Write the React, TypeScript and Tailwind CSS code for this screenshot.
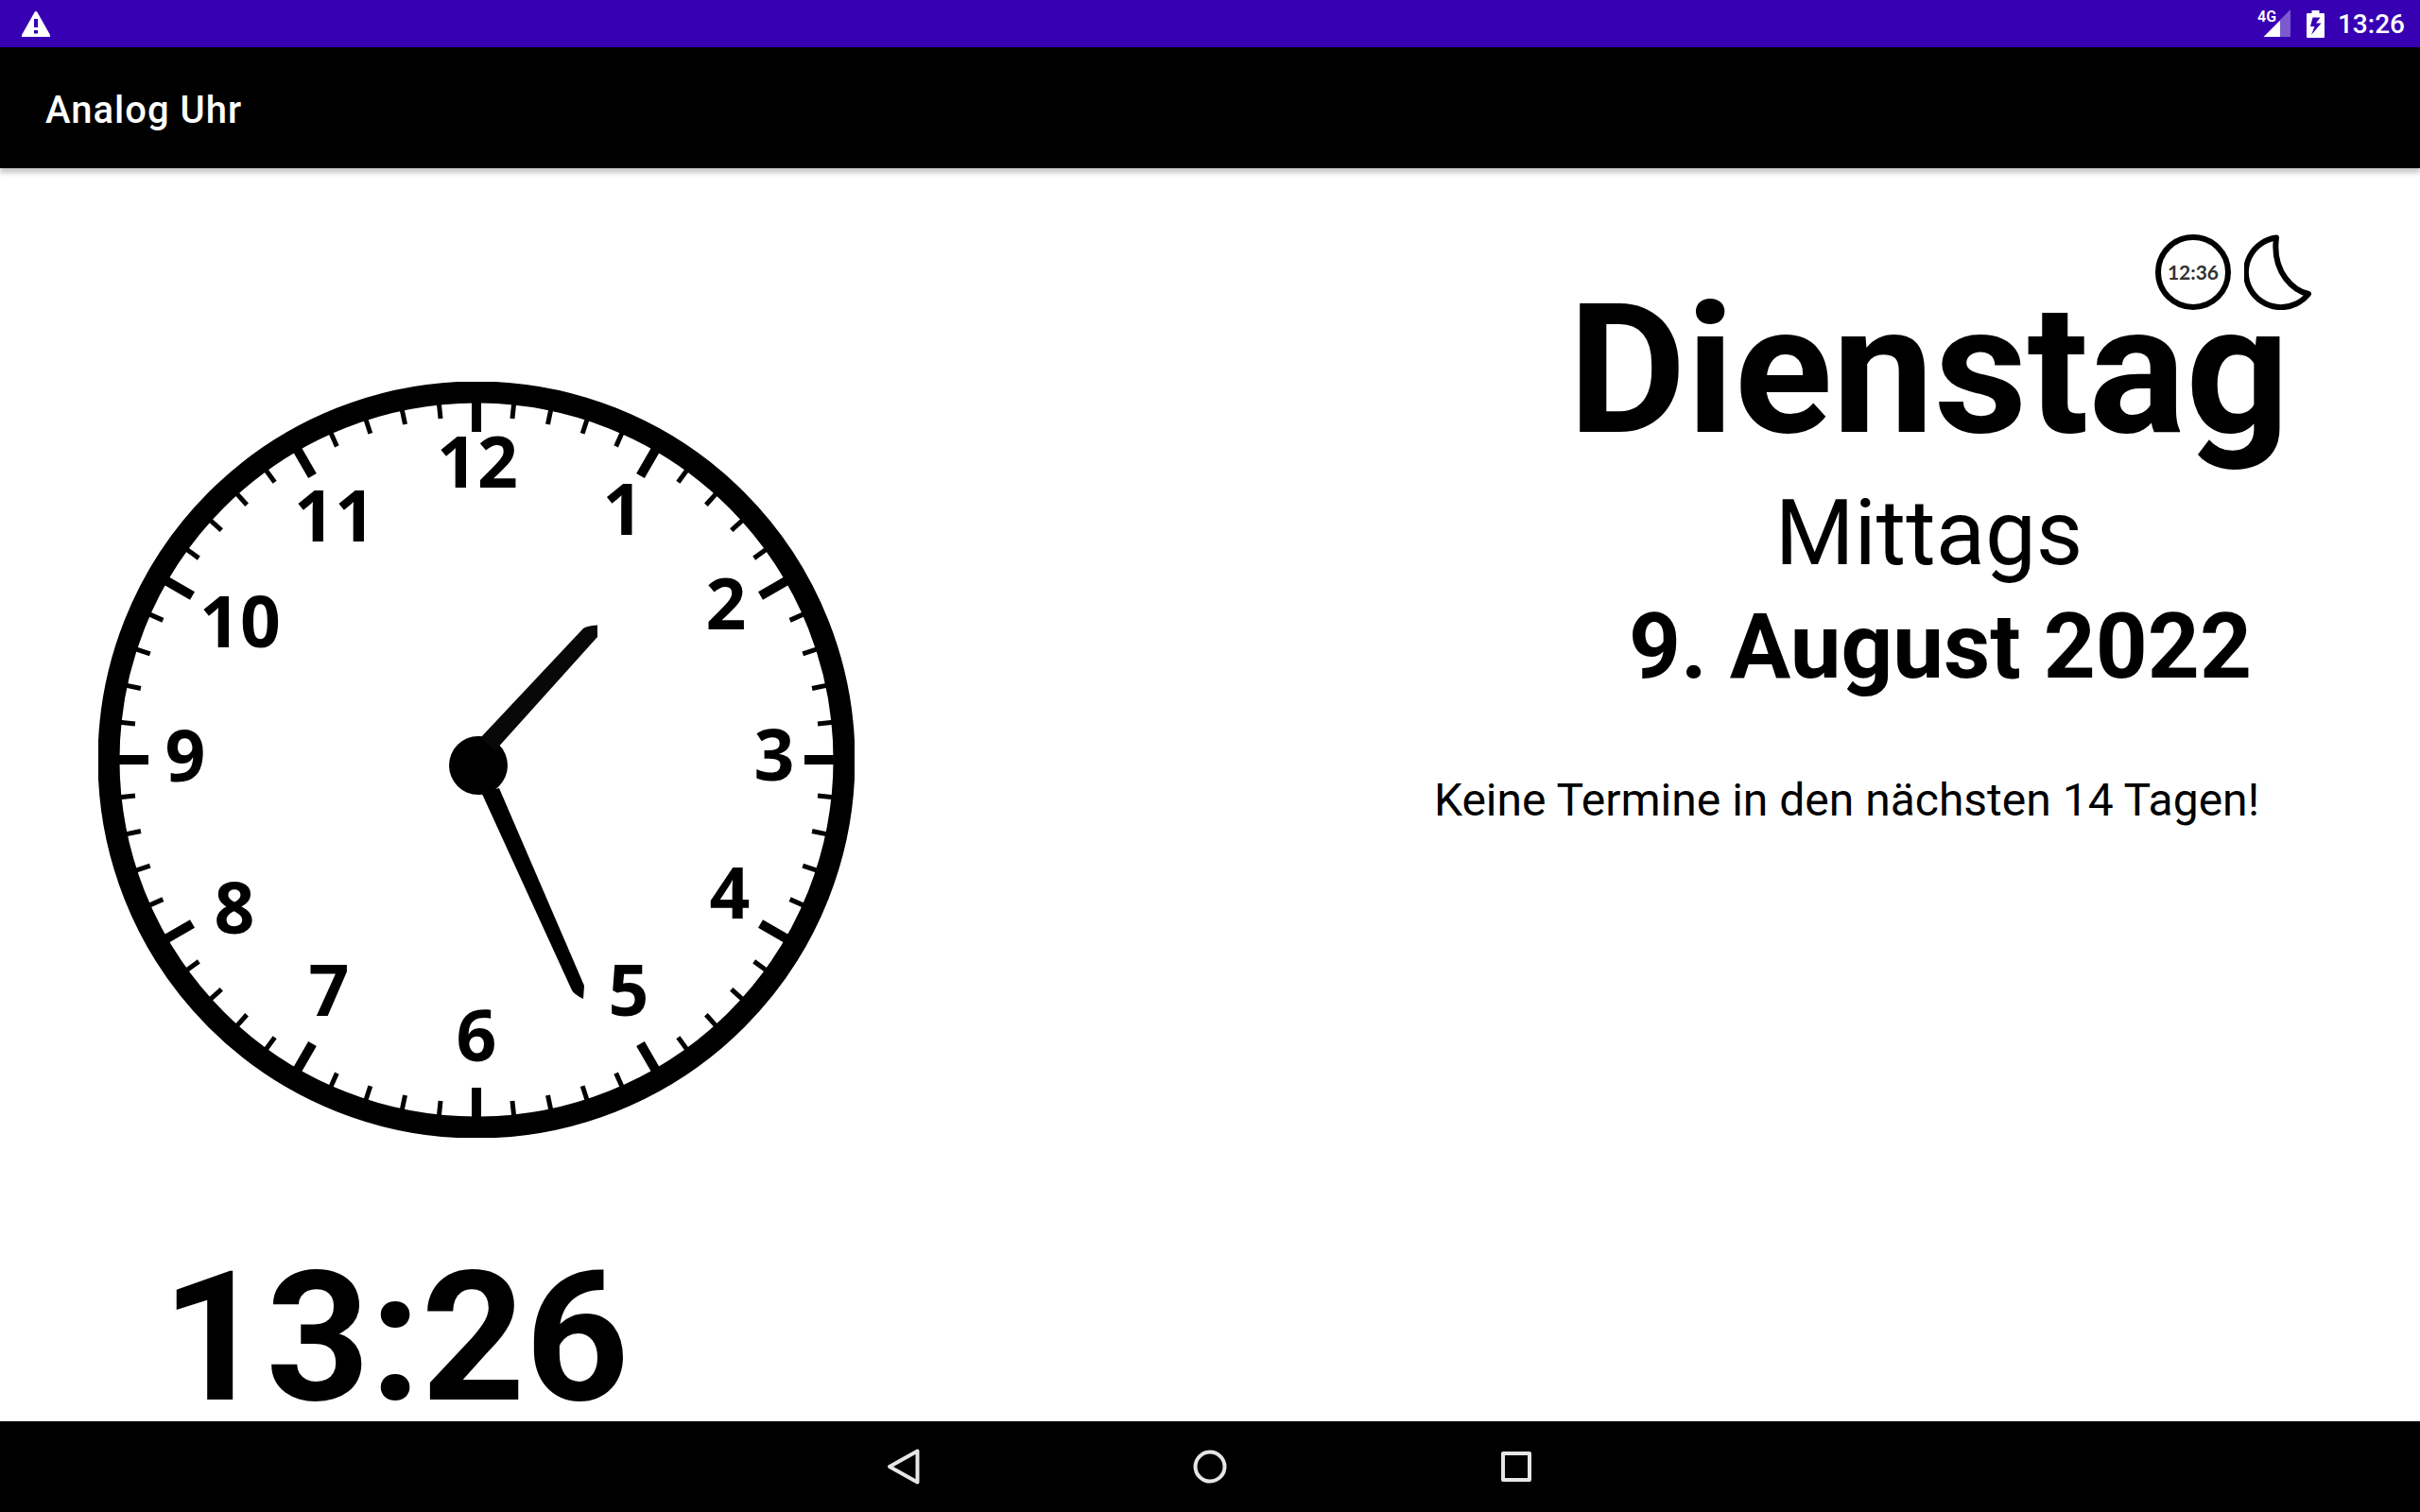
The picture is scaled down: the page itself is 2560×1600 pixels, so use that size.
import React from "react";

const NUMERALS = [
  { label: "12", x: 401, y: 112 },
  { label: "1", x: 555, y: 162 },
  { label: "2", x: 664, y: 262 },
  { label: "3", x: 715, y: 422 },
  { label: "4", x: 668, y: 568 },
  { label: "5", x: 561, y: 671 },
  { label: "6", x: 400, y: 719 },
  { label: "7", x: 244, y: 671 },
  { label: "8", x: 144, y: 584 },
  { label: "9", x: 92, y: 423 },
  { label: "10", x: 150, y: 281 },
  { label: "11", x: 250, y: 169 },
];

function AnalogClock() {
  return (
    <svg viewBox="0 0 800 800" role="img" aria-label="13:26" className="w-[800px] h-[800px] shrink-0">
      <circle cx="400" cy="400" r="389" fill="none" stroke="#000" strokeWidth="23" />
      {Array.from({ length: 60 }, (_, i) => (
        <line
          key={i}
          x1="400"
          x2="400"
          y1="18"
          y2={i % 5 === 0 ? 53 : 37}
          stroke="#000"
          strokeWidth={i % 5 === 0 ? 10 : 5}
          transform={`rotate(${i * 6} 400 400)`}
        />
      ))}
      <g fontFamily="'Open Sans', 'Noto Sans', sans-serif" fontWeight="700" fontSize="75" textAnchor="middle">
        {NUMERALS.map((n) => (
          <text key={n.label} x={n.x} y={n.y}>
            {n.label}
          </text>
        ))}
      </g>
      <circle cx="402" cy="406" r="31" />
      <path d="M404 377 L513 261 Q517 258 528 257.500 L528 270 L420 390 Z" fill="#080808" />
      <path d="M405 434 L501 644 Q503 648 513 653 L514 639 L424 430 Z" />
    </svg>
  );
}

function WarningIcon() {
  return (
    <svg viewBox="0 0 30 27" className="h-[27px] w-[30px]" aria-hidden="true">
      <path fill="#fff" fillRule="evenodd" d="M15 0 Q16 0 16.500 1 L30 25 Q30.500 27 29 27 H1 Q-.5 27 0 25 L13.500 1 Q14 0 15 0 Z M13 8 V17 H17 V8 Z M13 20 V23.500 H17 V20 Z" />
    </svg>
  );
}

function SignalIcon() {
  return (
    <svg viewBox="0 0 36 38" className="h-[38px] w-[36px]" aria-label="4G" role="img">
      <path d="M35 4 V33 H24 V15 Z" fill="#fff" opacity=".35" />
      <path d="M24 15.500 V33 H6.500 Z" fill="#fff" />
      <text x="0" y="17" fill="#fff" fontFamily="Roboto, sans-serif" fontWeight="600" fontSize="16">
        4G
      </text>
    </svg>
  );
}

function BatteryIcon() {
  return (
    <svg viewBox="0 0 19 29" className="h-[29px] w-[19px]" aria-hidden="true">
      <path fill="#fff" fillRule="evenodd" d="M5.500 0 H13.500 V3 H18 Q19 3 19 4 V28 Q19 29 18 29 H1 Q0 29 0 28 V4 Q0 3 1 3 H5.500 Z M6.500 7.500 L4 17 H8.500 L5 26 L15.500 13.500 H10 L14.500 7.500 Z" />
    </svg>
  );
}

export default function App() {
  return (
    <div className="flex min-h-screen flex-col bg-white font-['Roboto',sans-serif] text-black">
      <div className="flex h-[50px] items-center justify-between bg-[#3700b3] pr-4 pl-[23px] text-white">
        <WarningIcon />
        <div className="flex items-center">
          <SignalIcon />
          <span className="mr-[14px] ml-4">
            <BatteryIcon />
          </span>
          <time className="pt-0.5 text-[28px] leading-8 font-medium">13:26</time>
        </div>
      </div>

      <header className="relative flex h-32 items-center bg-black px-12 pt-1.5 shadow-[0_5px_5px_rgba(0,0,0,0.22)]">
        <h1 className="text-[40px] leading-[48px] font-medium tracking-wide text-white">Analog Uhr</h1>
      </header>

      <main className="flex flex-1 justify-between pr-[114px] pl-[104px]">
        <section className="flex flex-col pt-[226px]">
          <AnalogClock />
          <time className="mt-32 ml-[67px] text-[192px] leading-[168px] font-bold">13:26</time>
        </section>

        <section className="flex flex-col items-end pt-[70px]">
          <div className="flex gap-[14px]">
            <button type="button" aria-label="Digitaluhr" className="h-20 w-20">
              <svg viewBox="0 0 80 80" className="h-20 w-20">
                <circle cx="40" cy="40" r="37" fill="none" stroke="#000" strokeWidth="6" />
                <text x="40" y="48" textAnchor="middle" fontFamily="Lato, sans-serif" fontWeight="700" fontSize="21" fill="#333">
                  12:36
                </text>
              </svg>
            </button>
            <button type="button" aria-label="Nachtmodus" className="h-20 w-[72px]">
              <svg viewBox="0 0 72 80" className="h-20 w-[72px]">
                <path d="M34 3.500 A37 37 0 1 0 68 63 C54 60 29 42 34 3.500 Z" fill="none" stroke="#000" strokeWidth="6" strokeLinejoin="round" />
              </svg>
            </button>
          </div>
          <div className="mr-[24px] flex flex-col items-center">
            <h2 className="text-[192px] leading-[128px] font-bold">Dienstag</h2>
            <p className="mt-[60px] text-[96px] leading-[96px]">Mittags</p>
          </div>
          <p className="mt-6 mr-16 text-[96px] leading-[96px] font-bold">9. August 2022</p>
          <p className="mt-[91px] mr-14 text-[48px] leading-[48px]">Keine Termine in den nächsten 14 Tagen!</p>
        </section>
      </main>

      <nav className="flex h-24 items-center justify-center gap-[228px] bg-black">
        <button type="button" aria-label="Zurück" className="flex h-24 w-24 items-center justify-center">
          <svg viewBox="0 0 40 40" className="h-10 w-10" fill="none" stroke="#e6e6e6" strokeWidth="4" strokeLinejoin="round">
            <path d="M34.500 3.500 V36.500 L5 20 Z" />
          </svg>
        </button>
        <button type="button" aria-label="Startseite" className="flex h-24 w-24 items-center justify-center">
          <svg viewBox="0 0 40 40" className="h-10 w-10" fill="none" stroke="#e6e6e6" strokeWidth="4">
            <circle cx="20" cy="20" r="15.500" />
          </svg>
        </button>
        <button type="button" aria-label="Übersicht" className="flex h-24 w-24 items-center justify-center">
          <svg viewBox="0 0 40 40" className="h-10 w-10" fill="none" stroke="#e6e6e6" strokeWidth="4" strokeLinejoin="round">
            <path d="M6 6 H34 V34 H6 Z" />
          </svg>
        </button>
      </nav>
    </div>
  );
}
